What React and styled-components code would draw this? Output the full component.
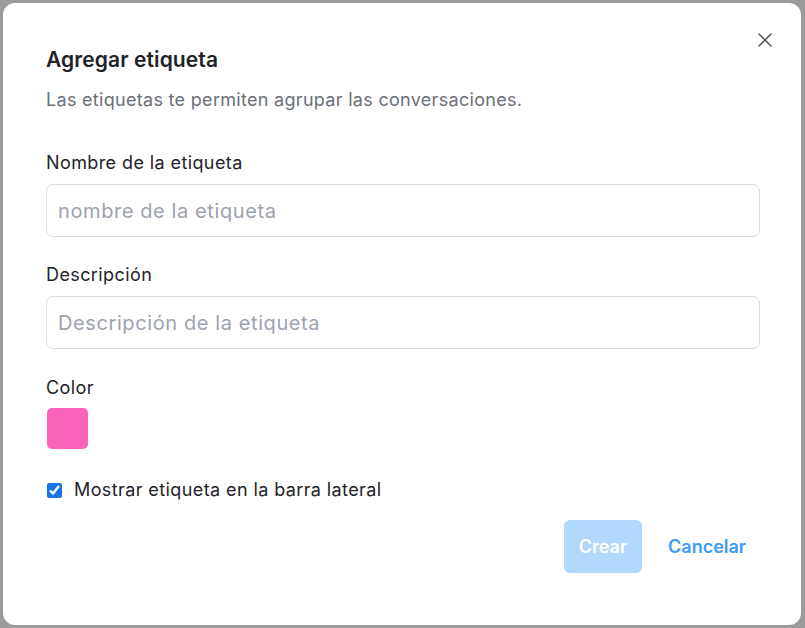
import { useState } from 'react'
import styled, { createGlobalStyle } from 'styled-components'

const GlobalStyle = createGlobalStyle`
  html, body {
    margin: 0;
    padding: 0;
    height: 100%;
  }
  body {
    font-family: Inter, "Noto Sans", sans-serif;
    background: #9b9b9b;
  }
  #root {
    height: 100%;
  }
  * {
    box-sizing: border-box;
  }
`

const Backdrop = styled.div`
  height: 628px;
  padding: 3px 4px 3px 3px;
  background: #9b9b9b;
  display: flex;
`

const Dialog = styled.div`
  position: relative;
  flex: 1;
  background: #ffffff;
  border-radius: 12px;
  padding: 43px 41px 52px 43px;
  display: flex;
  flex-direction: column;
`

const CloseButton = styled.button`
  position: absolute;
  top: 25px;
  right: 24px;
  width: 24px;
  height: 24px;
  padding: 0;
  border: none;
  background: transparent;
  display: flex;
  align-items: center;
  justify-content: center;
  cursor: pointer;
`

const Title = styled.h2`
  margin: 0;
  font-size: 21px;
  line-height: 28px;
  font-weight: 600;
  letter-spacing: 0.1px;
  color: #1f2328;
`

const Subtitle = styled.p`
  margin: 14px 0 0;
  font-size: 18px;
  line-height: 24px;
  letter-spacing: 0.3px;
  color: #6b7078;
`

const Field = styled.div`
  display: flex;
  flex-direction: column;
  gap: ${p => p.$gap || 9}px;
  margin-top: ${p => p.$top}px;
`

const Label = styled.label`
  font-size: 18px;
  line-height: 24px;
  font-weight: 400;
  letter-spacing: 0.4px;
  color: #1f2328;
`

const Input = styled.input`
  width: 100%;
  height: 53px;
  border: 1px solid #d9dce1;
  border-radius: 7px;
  padding: 0 11px;
  font-family: inherit;
  font-size: 20px;
  letter-spacing: 0.6px;
  color: #1f2328;
  outline: none;

  &::placeholder {
    color: #9ca3af;
  }
`

const Swatch = styled.div`
  width: 41px;
  height: 41px;
  border-radius: 5px;
  background: ${p => p.$color};
  margin-left: 1px;
`

const CheckRow = styled.label`
  display: flex;
  align-items: center;
  gap: 12px;
  margin-top: 29px;
  margin-left: 1px;
  font-size: 18px;
  line-height: 24px;
  letter-spacing: 0.4px;
  color: #1f2328;
`

const Check = styled.input`
  margin: 0;
  width: 15px;
  height: 15px;
  accent-color: #1a73e8;
`

const Actions = styled.div`
  display: flex;
  justify-content: flex-end;
  gap: 12px;
  margin-top: 18px;
`

const Button = styled.button`
  height: 53px;
  padding: 0 ${p => (p.$primary ? 15 : 14)}px;
  border: none;
  border-radius: 6px;
  font-family: inherit;
  font-size: 18px;
  font-weight: 600;
  cursor: pointer;
  background: ${p => (p.$primary ? '#b1d8fd' : 'transparent')};
  color: ${p => (p.$primary ? '#ffffff' : '#3d9bf3')};
`

export default function App() {
  const [name, setName] = useState('')
  const [desc, setDesc] = useState('')
  const [showSidebar, setShowSidebar] = useState(true)

  return (
    <>
      <GlobalStyle />
      <Backdrop>
        <Dialog>
          <CloseButton aria-label="Cerrar">
            <svg width="16" height="16" viewBox="0 0 16 16" fill="none">
              <path d="M2 2L14 14M14 2L2 14" stroke="#4b4f56" strokeWidth="1.5" strokeLinecap="round" />
            </svg>
          </CloseButton>
          <Title>Agregar etiqueta</Title>
          <Subtitle>Las etiquetas te permiten agrupar las conversaciones.</Subtitle>

          <Field $top={39}>
            <Label>Nombre de la etiqueta</Label>
            <Input
              placeholder="nombre de la etiqueta"
              value={name}
              onChange={e => setName(e.target.value)}
            />
          </Field>

          <Field $top={26}>
            <Label>Descripción</Label>
            <Input
              placeholder="Descripción de la etiqueta"
              value={desc}
              onChange={e => setDesc(e.target.value)}
            />
          </Field>

          <Field $top={27} $gap={8}>
            <Label>Color</Label>
            <Swatch $color="#f963b9" />
          </Field>

          <CheckRow>
            <Check
              type="checkbox"
              checked={showSidebar}
              onChange={e => setShowSidebar(e.target.checked)}
            />
            Mostrar etiqueta en la barra lateral
          </CheckRow>

          <Actions>
            <Button $primary disabled={!name}>Crear</Button>
            <Button>Cancelar</Button>
          </Actions>
        </Dialog>
      </Backdrop>
    </>
  )
}
